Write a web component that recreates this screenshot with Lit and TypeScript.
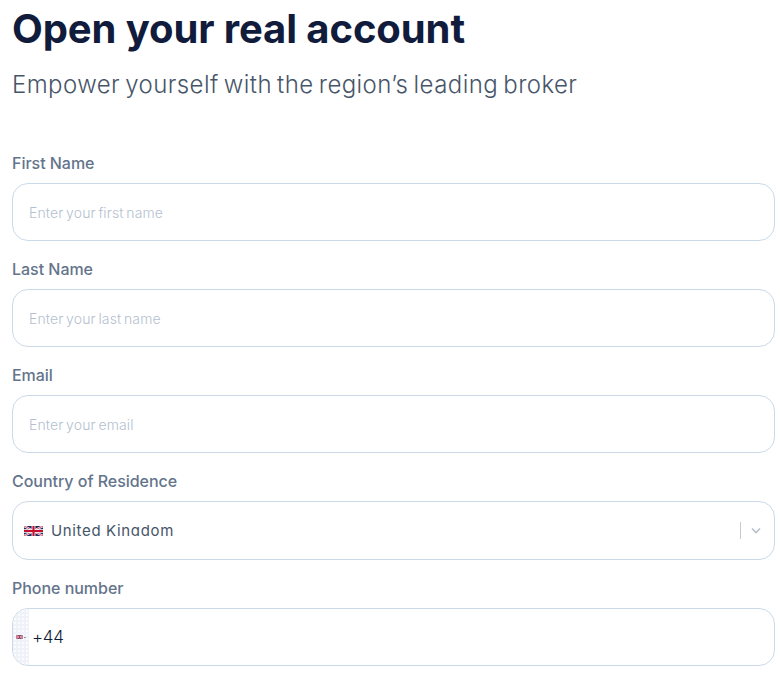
import { LitElement, html, css } from "lit";
import { customElement } from "lit/decorators.js";

const flag = html`<svg class="flag-svg" viewBox="0 0 60 36" preserveAspectRatio="none" aria-hidden="true">
  <rect width="60" height="36" fill="#1f2a60"/>
  <path d="M0 0L60 36M60 0L0 36" stroke="#fff" stroke-width="7"/>
  <path d="M0 0L60 36M60 0L0 36" stroke="#c8102e" stroke-width="2.5"/>
  <path d="M30 0V36M0 18H60" stroke="#fff" stroke-width="12"/>
  <path d="M30 0V36M0 18H60" stroke="#c8102e" stroke-width="7"/>
</svg>`;

@customElement("app-root")
export class AppRoot extends LitElement {
  static styles = css`
    :host {
      display: block;
      box-sizing: border-box;
      width: 780px;
      height: 676px;
      overflow: hidden;
      padding: 0 5px 0 12px;
      background: #fff;
      font-family: Inter, "Noto Sans", sans-serif;
    }
    h1 {
      margin: 0;
      padding-top: 5px;
      font-size: 40px;
      line-height: 48px;
      font-weight: 700;
      letter-spacing: -0.1px;
      color: #111b3c;
    }
    .sub {
      margin: 0;
      padding-top: 15px;
      font-size: 24px;
      line-height: 34px;
      font-weight: 300;
      letter-spacing: 0.42px;
      word-spacing: -2px;
      color: #475569;
    }
    form {
      display: flex;
      flex-direction: column;
      gap: 16px;
      padding-top: 49px;
    }
    .field {
      display: flex;
      flex-direction: column;
      gap: 8px;
    }
    label {
      font-size: 16px;
      line-height: 24px;
      font-weight: 500;
      letter-spacing: -0.03px;
      color: #64748b;
    }
    .box {
      box-sizing: border-box;
      height: 58px;
      border: 1px solid #cbd9e8;
      border-radius: 16px;
      display: flex;
      align-items: center;
      background: #fff;
      overflow: hidden;
    }
    .ph {
      padding-left: 16px;
      font-size: 14px;
      font-weight: 300;
      letter-spacing: 0.15px;
      word-spacing: -1.5px;
      color: #b4bfd0;
    }
    .select {
      height: 59px;
      padding: 0 13px 0 11px;
    }
    .flag {
      display: flex;
      width: 19px;
      height: 10px;
    }
    .flag-svg {
      width: 100%;
      height: 100%;
      display: block;
    }
    .country-clip {
      margin: 0 0 2px 8px;
      height: 13px;
      overflow: hidden;
      flex: 1;
      font-size: 15px;
      line-height: 15px;
      font-weight: 400;
      letter-spacing: 0.65px;
      color: #475569;
    }
    .sep {
      width: 1px;
      height: 17px;
      background: #c5cbd6;
      margin-right: 10px;
    }
    .chev {
      width: 10px;
      height: 7px;
      display: block;
    }
    .dial {
      align-self: stretch;
      width: 13px;
      padding-left: 3px;
      background-color: #eff2f8;
      background-image: radial-gradient(#fbfcfe 0.7px, transparent 0.9px);
      background-size: 4px 4px;
      display: flex;
      align-items: center;
      gap: 1px;
    }
    .mini {
      display: flex;
      width: 7px;
      height: 4px;
    }
    .caret {
      width: 2px;
      height: 1px;
      background: #8b93a5;
    }
    .tel {
      padding-left: 3px;
      font-size: 17px;
      font-weight: 300;
      letter-spacing: -0.3px;
      color: #111b3c;
    }
  `;

  private text(label: string, placeholder: string) {
    return html`<div class="field">
      <label>${label}</label>
      <div class="box"><span class="ph">${placeholder}</span></div>
    </div>`;
  }

  render() {
    return html`
      <h1>Open your real account</h1>
      <p class="sub">Empower yourself with the region’s leading broker</p>
      <form>
        ${this.text("First Name", "Enter your first name")}
        ${this.text("Last Name", "Enter your last name")}
        ${this.text("Email", "Enter your email")}
        <div class="field">
          <label>Country of Residence</label>
          <div class="box select">
            <span class="flag">${flag}</span>
            <span class="country-clip">United Kingdom</span>
            <span class="sep"></span>
            <svg class="chev" viewBox="0 0 10 7" aria-hidden="true">
              <path d="M1 1.5L5 5.5L9 1.5" fill="none" stroke="#b8bfca" stroke-width="1.6"/>
            </svg>
          </div>
        </div>
        <div class="field">
          <label>Phone number</label>
          <div class="box">
            <span class="dial"><span class="mini">${flag}</span><span class="caret"></span></span>
            <span class="tel">+44</span>
          </div>
        </div>
      </form>
    `;
  }
}
